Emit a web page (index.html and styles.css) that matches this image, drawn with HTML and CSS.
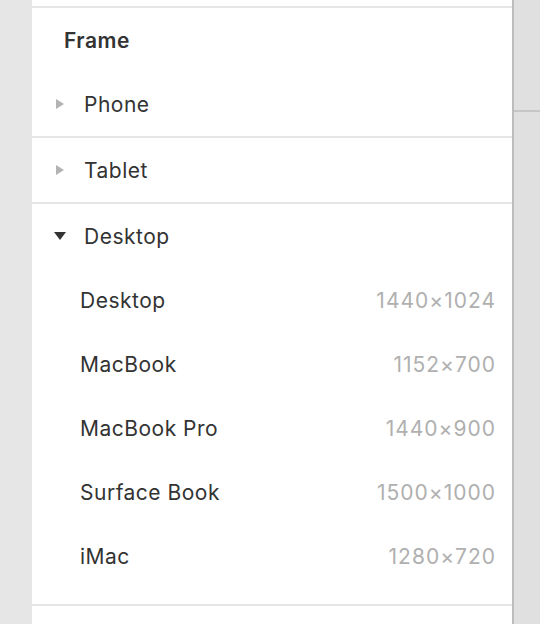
FILE: index.html
```html
<!DOCTYPE html>
<html>
<head>
<meta charset="utf-8">
<link rel="stylesheet" href="styles.css">
</head>
<body>
<div class="stage">
  <div class="panel">
    <div class="top-gap"></div>
    <div class="header">Frame</div>
    <div class="group">
      <div class="row">
        <svg class="tri closed" width="8" height="10" viewBox="0 0 8 10"><path d="M0 0 L8 5 L0 10 Z"/></svg>
        <span class="label">Phone</span>
      </div>
    </div>
    <div class="group">
      <div class="row">
        <svg class="tri closed" width="8" height="10" viewBox="0 0 8 10"><path d="M0 0 L8 5 L0 10 Z"/></svg>
        <span class="label">Tablet</span>
      </div>
    </div>
    <div class="group open">
      <div class="row">
        <svg class="tri opened" width="12" height="8" viewBox="0 0 12 8"><path d="M0 0 L12 0 L6 8 Z"/></svg>
        <span class="label">Desktop</span>
      </div>
      <div class="item"><span>Desktop</span><span class="dim">1440×1024</span></div>
      <div class="item"><span>MacBook</span><span class="dim">1152×700</span></div>
      <div class="item"><span>MacBook Pro</span><span class="dim">1440×900</span></div>
      <div class="item"><span>Surface Book</span><span class="dim">1500×1000</span></div>
      <div class="item"><span>iMac</span><span class="dim">1280×720</span></div>
    </div>
  </div>
  <div class="side">
    <div class="side-top"></div>
    <div class="side-line"></div>
  </div>
</div>
</body>
</html>
```

FILE: styles.css
```css
html, body {
  margin: 0;
  padding: 0;
}
body {
  background: #e6e6e6;
  font-family: Inter, "Noto Sans", "Liberation Sans", sans-serif;
  color: #333333;
  width: 540px;
  height: 624px;
  overflow: hidden;
}
.stage {
  display: flex;
  height: 624px;
  padding-left: 32px;
  box-sizing: border-box;
}
.panel {
  width: 480px;
  background: #ffffff;
  display: flex;
  flex-direction: column;
  letter-spacing: 0.5px;
}
.top-gap {
  height: 6px;
  border-bottom: 2px solid #e6e6e6;
}
.header {
  height: 64px;
  display: flex;
  align-items: center;
  padding-left: 32px;
  font-size: 21px;
  font-weight: 600;
  color: #333333;
}
.group {
  border-bottom: 2px solid #e6e6e6;
}
.group.open {
  padding-bottom: 16px;
}
.row {
  height: 64px;
  display: flex;
  align-items: center;
  font-size: 21px;
}
.tri {
  flex: none;
}
.tri.closed {
  fill: #b3b3b3;
  margin-left: 24px;
  margin-right: 20px;
}
.tri.opened {
  fill: #333333;
  margin-left: 22px;
  margin-right: 18px;
}
.item {
  height: 64px;
  display: flex;
  align-items: center;
  justify-content: space-between;
  padding-left: 48px;
  padding-right: 16px;
  font-size: 21px;
}
.dim {
  color: #b0b0b0;
  letter-spacing: 1px;
}
.side {
  flex: 1;
  background: #e0e0e0;
  border-left: 2px solid #bdbdbd;
  display: flex;
  flex-direction: column;
}
.side-top {
  height: 110px;
}
.side-line {
  height: 2px;
  background: #c6c6c6;
}
```
